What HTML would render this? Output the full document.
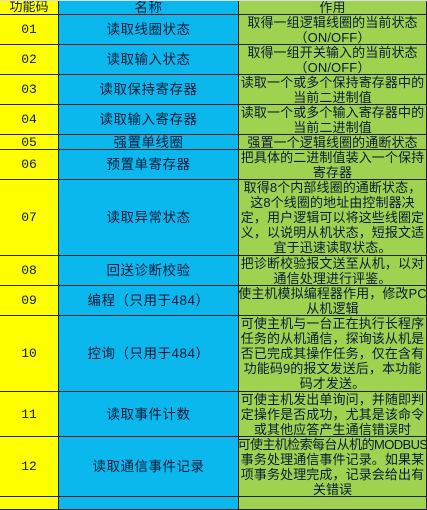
<!DOCTYPE html><html><head><meta charset="utf-8"><style>
body{margin:0;width:427px;height:499px;overflow:hidden;background:#fff;font-family:"Liberation Sans","Noto Sans CJK SC",sans-serif;}
.c{position:absolute;box-sizing:border-box;border-right:1px solid #222;border-bottom:1px solid #222;display:flex;align-items:center;justify-content:center;text-align:center;font-size:13.5px;line-height:15px;color:#0a1a3a;overflow:hidden;white-space:nowrap}
.a{left:0;width:59px;background:#ffff00;font-family:"Liberation Mono",monospace;font-size:13px}
.b{left:59px;width:180px;background:#0bb8ee;letter-spacing:0.5px}
.g{left:239px;width:188px;background:#9fd24e;font-size:13px;letter-spacing:0.1px}
.n{letter-spacing:-0.6px}
</style></head><body>
<div style="position:absolute;left:0;top:0;width:427px;height:2px;background:#dde"></div>
<div id="t"></div>
<script>
var rows=[[1,15,"功能码","名称","作用"],[15,45,"01","读取线圈状态","取得一组逻辑线圈的当前状态<br>（ON/OFF）"],[45,75,"02","读取输入状态","取得一组开关输入的当前状态<br>（ON/OFF）"],[75,105,"03","读取保持寄存器","读取一个或多个保持寄存器中的<br>当前二进制值"],[105,135,"04","读取输入寄存器","读取一个或多个输入寄存器中的<br>当前二进制值"],[135,150,"05","强置单线圈","强置一个逻辑线圈的通断状态"],[150,180,"06","预置单寄存器","把具体的二进制值装入一个保持<br>寄存器"],[180,256,"07","读取异常状态","取得8个内部线圈的通断状态，<br>这8个线圈的地址由控制器决<br>定，用户逻辑可以将这些线圈定<br>义，以说明从机状态，短报文适<br>宜于迅速读取状态。"],[256,286,"08","回送诊断校验","把诊断校验报文送至从机，以对<br>通信处理进行评鉴。"],[286,316,"09","编程（只用于484）","使主机模拟编程器作用，修改PC<br>从机逻辑"],[316,392,"10","控询（只用于484）","可使主机与一台正在执行长程序<br>任务的从机通信，探询该从机是<br>否已完成其操作任务，仅在含有<br>功能码9的报文发送后，本功能<br>码才发送。"],[392,437,"11","读取事件计数","可使主机发出单询问，并随即判<br>定操作是否成功，尤其是该命令<br>或其他应答产生通信错误时"],[437,497,"12","读取通信事件记录","<span class=\"n\">可使主机检索每台从机的MODBUS</span><br>事务处理通信事件记录。如果某<br>项事务处理完成，记录会给出有<br>关错误"],[497,510,"","",""]];
var h="";rows.forEach(function(r){var s="top:"+r[0]+"px;height:"+(r[1]-r[0])+"px";
h+='<div class="c a" style="'+s+'">'+r[2]+'</div><div class="c b" style="'+s+'">'+r[3]+'</div><div class="c g" style="'+s+'"><div>'+r[4]+'</div></div>';});
document.getElementById("t").innerHTML=h;
</script>
</body></html>
